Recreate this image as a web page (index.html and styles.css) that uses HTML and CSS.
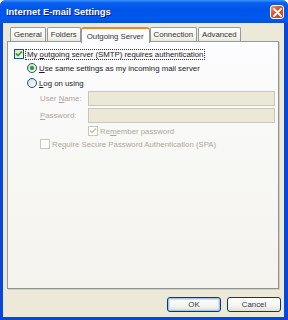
FILE: index.html
```html
<!DOCTYPE html>
<html>
<head>
<meta charset="utf-8">
<link rel="stylesheet" href="styles.css">
</head>
<body>
<div class="window">
  <div class="titlebar">
    <span class="title">Internet E-mail Settings</span>
    <span class="close"><svg width="9" height="9" viewBox="0 0 9 9"><path d="M1 1L8 8M8 1L1 8" stroke="#fff" stroke-width="1.8" stroke-linecap="round"/></svg></span>
  </div>
  <div class="client">
    <div class="tabs">
      <div class="tab">General</div>
      <div class="tab">Folders</div>
      <div class="tab active">Outgoing Server</div>
      <div class="tab">Connection</div>
      <div class="tab">Advanced</div>
    </div>
    <div class="panel">
      <div class="row r1">
        <span class="cb checked"><svg width="8" height="8" viewBox="0 0 8 8"><path d="M1 3.5L3 5.5L7 1.5" fill="none" stroke="#21a121" stroke-width="1.7"/></svg></span>
        <span class="focus">My <u>o</u>utgoing server (SMTP) requires authentication</span>
      </div>
      <div class="row r2">
        <span class="radio on"><span class="dot"></span></span>
        <span><u>U</u>se same settings as my incoming mail server</span>
      </div>
      <div class="row r3">
        <span class="radio"></span>
        <span><u>L</u>og on using</span>
      </div>
      <div class="field-row f1">
        <span class="lbl">User <u>N</u>ame:</span>
        <span class="input"></span>
      </div>
      <div class="field-row f2">
        <span class="lbl"><u>P</u>assword:</span>
        <span class="input"></span>
      </div>
      <div class="row r4 dis">
        <span class="cb disabled"><svg width="8" height="8" viewBox="0 0 8 8"><path d="M1 3.5L3 5.5L7 1.5" fill="none" stroke="#c5c2b2" stroke-width="1.5"/></svg></span>
        <span>Re<u>m</u>ember password</span>
      </div>
      <div class="row r5 dis">
        <span class="cb disabled"></span>
        <span>Re<u>q</u>uire Secure Password Authentication (SPA)</span>
      </div>
    </div>
    <div class="buttons">
      <div class="btn default">OK</div>
      <div class="btn">Cancel</div>
    </div>
  </div>
</div>
</body>
</html>
```
FILE: styles.css
```css
* { box-sizing: border-box; }
html, body { margin: 0; padding: 0; background: #fff; }
body { font-family: "Liberation Sans", Arial, sans-serif; font-size: 7.8px; color: #1a1a1a; }
u { text-decoration: underline; }

.window {
  width: 288px; height: 320px;
  display: flex; flex-direction: column;
  background: #0848d8;
  border-radius: 6px 6px 0 0;
  overflow: hidden;
}
.titlebar {
  height: 23px; flex: none;
  display: flex; align-items: center; justify-content: space-between;
  padding: 0 4px 0 6px;
  background: linear-gradient(#3d95ff 0%, #0a5fee 12%, #0053e8 45%, #0058ee 80%, #0a4fd6 100%);
}
.title {
  color: #fff; font-weight: bold; font-size: 9.4px;
  font-family: "Liberation Sans", Arial, sans-serif;
  text-shadow: 1px 1px 0 #0a1f8f;
}
.close {
  width: 14px; height: 14px;
  border: 1px solid #fff; border-radius: 3px;
  background: linear-gradient(135deg, #f0a080 0%, #e05a32 35%, #c8401c 100%);
  display: flex; align-items: center; justify-content: center;
  margin-top: 1px;
}

.client {
  flex: 1;
  margin: 0 4px 3px 3px;
  background: #ece9d8;
  padding: 3px 5px 0 4px;
  display: flex; flex-direction: column;
}
.tabs {
  display: flex; align-items: flex-end;
  height: 16px; padding-left: 3px;
  position: relative; z-index: 1;
}
.tab {
  height: 14px;
  padding: 0 3px;
  border: 1px solid #919b9c; border-bottom: none;
  border-radius: 2px 2px 0 0;
  background: linear-gradient(#fefefe, #f4f3ee 70%, #e9e7dc);
  display: flex; align-items: center;
  margin-right: 1px;
  white-space: nowrap;
  margin-bottom: 1px;
  color: #333;
}
.tab.active {
  height: 16px;
  margin: 0 -1px -1px -1px;
  padding: 0 5px;
  background: #fcfcfe;
  border-top: 2px solid #e68b2c;
  border-radius: 3px 3px 0 0;
  position: relative; z-index: 2;
}
.tab.active + .tab { margin-left: 1px; }

.panel {
  height: 248px; flex: none;
  border: 1px solid #919b9c;
  border-right-color: #8c9394; border-bottom-color: #8c9394;
  background: linear-gradient(#fcfcfe 0%, #f7f7f4 50%, #f4f3ee 100%);
  box-shadow: 1px 1px 0 #d0cebf;
  padding: 6px 0 0 6px;
  margin-top: -1px;
}
.row { display: flex; align-items: center; height: 12px; white-space: nowrap; }
.r2 { margin-top: 2px; padding-left: 13px; }
.r3 { margin-top: 3px; padding-left: 13px; }
.r4 { margin-top: 2px; padding-left: 74px; }
.r5 { margin-top: 1px; padding-left: 26px; }

.cb {
  width: 10px; height: 10px; flex: none;
  border: 1px solid #1c5180;
  background: linear-gradient(135deg, #dcdad0, #fff);
  display: flex; align-items: center; justify-content: center;
  margin-right: 2px;
}
.cb.disabled { border-color: #c9c7ba; background: #fff; }
.focus { outline: 1px dotted #333; outline-offset: 0; padding: 0 1px; }

.radio {
  width: 10px; height: 10px; flex: none;
  border: 1px solid #1c5180; border-radius: 50%;
  background: linear-gradient(135deg, #dcdad0, #fff);
  display: flex; align-items: center; justify-content: center;
  margin-right: 2px;
}
.dot { width: 4px; height: 4px; border-radius: 50%; background: #21a121; box-shadow: 0 0 1px #4cc24c; }

.dis { color: #aca899; }
.field-row { display: flex; align-items: center; height: 15px; padding-left: 26px; color: #aca899; }
.f1 { margin-top: 2px; }
.f2 { margin-top: 2px; }
.lbl { width: 48px; flex: none; }
.input {
  width: 187px; height: 15px;
  border: 1px solid #c9c7ba;
  background: #ebe8d7;
}

.buttons {
  display: flex; justify-content: flex-end; gap: 6px;
  margin-top: 8px; margin-right: -2px;
}
.btn {
  width: 54px; height: 15px;
  border: 1px solid #003c74; border-radius: 3px;
  background: linear-gradient(#ffffff 0%, #f5f4ef 60%, #e3e2d8 100%);
  display: flex; align-items: center; justify-content: center;
  color: #333;
}
.btn.default {
  box-shadow: inset 0 0 0 1px #a8c4f0, inset 0 0 0 2px #cfe0fa;
}
```
